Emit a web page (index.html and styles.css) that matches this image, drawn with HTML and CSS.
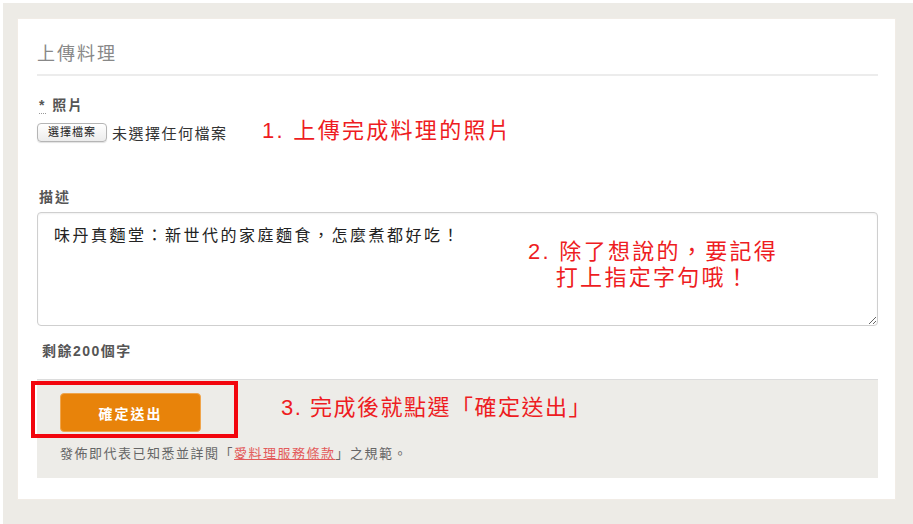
FILE: index.html
```html
<!DOCTYPE html>
<html lang="zh-Hant">
<head>
    <meta charset="UTF-8">
    <title>上傳料理</title>
    <link rel="stylesheet" href="styles.css">
</head>
<body>
    <div class="frame">
        <div class="card">
            <h2 class="title">上傳料理</h2>

            <div class="field">
                <label class="label"><abbr title="必填">*</abbr> 照片</label>
                <div class="file-row">
                    <span class="file-btn">選擇檔案</span>
                    <span class="file-name">未選擇任何檔案</span>
                </div>
            </div>

            <div class="field desc">
                <label class="label" for="desc">描述</label>
                <textarea id="desc" class="textarea">味丹真麵堂：新世代的家庭麵食，怎麼煮都好吃！</textarea>
                <div class="count">剩餘200個字</div>
            </div>

            <div class="actions">
                <button type="button" class="submit">確定送出</button>
                <p class="note">發佈即代表已知悉並詳閱「<a href="#">愛料理服務條款</a>」之規範。</p>

                <div class="mark"></div>
                <div class="hint hint-3">3. 完成後就點選「確定送出」</div>
            </div>

            <div class="hint hint-1">1. 上傳完成料理的照片</div>
            <div class="hint hint-2">2. 除了想說的，要記得<br>打上指定字句哦！</div>
        </div>
    </div>
</body>
</html>
```

FILE: styles.css
```css
body {
    margin: 0;
    background: #fff;
    font-family: "Liberation Sans", "Noto Sans CJK TC", sans-serif;
}
.frame {
    margin: 3px 0 0 3px;
    background: #edebe6;
    padding: 15px 17px 24px 14px;
    height: 483px;
}
.card {
    position: relative;
    background: #fff;
    border: 1px solid #f1ece6;
    box-sizing: border-box;
    height: 482px;
    padding: 23px 17px 0 19px;
}
.title {
    margin: 0;
    font-size: 18px;
    line-height: 24px;
    letter-spacing: 2px;
    font-weight: normal;
    color: #888;
    padding-bottom: 8px;
    border-bottom: 2px solid #ececec;
}
.field {
    margin-top: 19px;
}
.label {
    display: block;
    font-size: 14px;
    line-height: 20px;
    letter-spacing: 2px;
    font-weight: bold;
    color: #555;
    margin-left: 2px;
}
.label abbr {
    text-decoration: none;
    border-bottom: 1px dotted #999;
}
.file-row {
    display: flex;
    align-items: center;
    height: 24px;
    margin-top: 5px;
}
.file-btn {
    display: inline-block;
    width: 70px;
    height: 19px;
    box-sizing: border-box;
    border: 1px solid #b5b5b5;
    border-radius: 4px;
    background: linear-gradient(#fff, #ececec);
    font-size: 11px;
    line-height: 17px;
    letter-spacing: 1px;
    text-align: center;
    color: #222;
    box-shadow: 0 1px 1px rgba(0, 0, 0, 0.12);
}
.file-name {
    font-size: 15px;
    letter-spacing: 1.5px;
    color: #333;
    margin-left: 5px;
}
.desc {
    margin-top: 43px;
}
.textarea {
    display: block;
    width: 100%;
    height: 114px;
    box-sizing: border-box;
    margin-top: 5px;
    padding: 11px 16px;
    border: 1px solid #cfcfcf;
    border-radius: 4px;
    box-shadow: inset 0 1px 2px rgba(0, 0, 0, 0.06);
    font-family: "Liberation Sans", "Noto Sans CJK TC", sans-serif;
    font-size: 16px;
    line-height: 24px;
    letter-spacing: 2.5px;
    color: #222;
    resize: vertical;
}
.count {
    margin: 15px 0 0 5px;
    font-size: 14px;
    line-height: 20px;
    letter-spacing: 1.5px;
    font-weight: bold;
    color: #555;
}
.actions {
    position: relative;
    margin-top: 18px;
    background: #edece8;
    border-top: 1px solid #dcdcdc;
    padding: 13px 23px 13px;
    height: 72px;
}
.submit {
    display: block;
    width: 141px;
    height: 39px;
    background: #e8830a;
    border: 1px solid #f0a54c;
    border-radius: 4px;
    color: #fff;
    font-family: "Liberation Sans", "Noto Sans CJK TC", sans-serif;
    font-size: 14px;
    font-weight: bold;
    letter-spacing: 2px;
    cursor: pointer;
}
.note {
    margin: 12px 0 0;
    font-size: 13px;
    line-height: 20px;
    letter-spacing: 1.5px;
    color: #666;
}
.note a {
    color: #e35b5b;
}
.mark {
    position: absolute;
    left: -6px;
    top: 1px;
    width: 207px;
    height: 57px;
    box-sizing: border-box;
    border: 4px solid #f2050d;
}
.hint {
    position: absolute;
    color: #ee1c22;
    font-size: 22px;
    line-height: 26px;
    letter-spacing: 2px;
    white-space: nowrap;
}
.hint-1 {
    left: 244px;
    top: 99px;
    letter-spacing: 2.3px;
}
.hint-2 {
    left: 500px;
    top: 220px;
    width: 270px;
    text-align: center;
    letter-spacing: 2.3px;
}
.hint-3 {
    left: 244px;
    top: 15px;
    letter-spacing: 1.5px;
}
```
